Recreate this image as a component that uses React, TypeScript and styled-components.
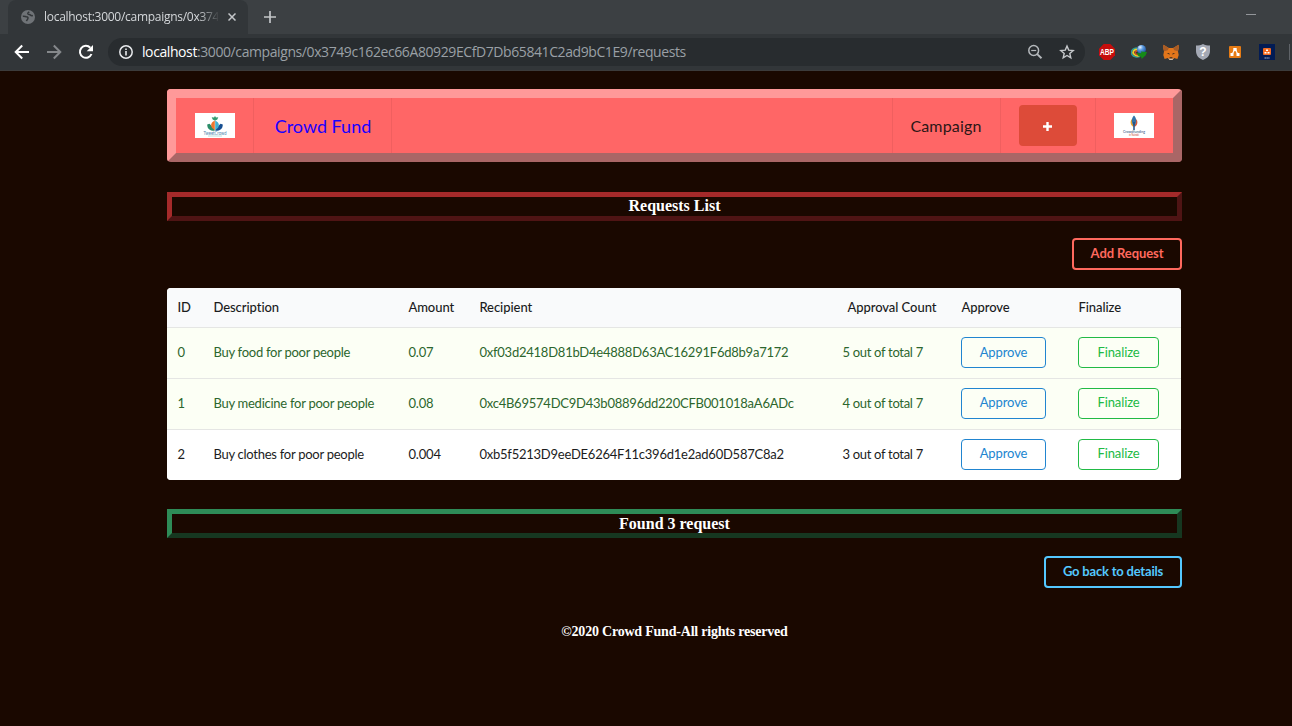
import React from 'react';
import styled, { createGlobalStyle } from 'styled-components';

const GlobalStyle = createGlobalStyle`
  *, *::before, *::after { box-sizing: border-box; }
  html, body { margin: 0; height: 100%; overflow: hidden; background: #1a0800; }
  body { font-family: Lato, sans-serif; font-size: 13px; }
  svg { display: block; flex: none; }
`;

const Window = styled.div`
  width: 1292px;
  height: 726px;
  overflow: hidden;
  background: #1a0800;
`;

const TabStrip = styled.div`
  display: flex;
  height: 34px;
  padding-left: 8px;
  background: #3c4043;
`;

const Tab = styled.div`
  display: flex;
  align-items: center;
  width: 240px;
  padding: 0 10px 0 13px;
  background: #323639;
  border-radius: 8px 8px 0 0;
`;

const TabTitle = styled.div`
  width: 174px;
  margin: 0 10px 0 9px;
  overflow: hidden;
  white-space: nowrap;
  font: 12px/16px 'Open Sans', sans-serif;
  letter-spacing: -0.28px;
  color: #d4d7da;
  mask-image: linear-gradient(to right, #000 154px, transparent 176px);
`;

const NewTab = styled.div`
  display: flex;
  align-items: center;
  padding-left: 16px;
`;

const Minimise = styled.div`
  width: 10px;
  height: 1px;
  margin: 14px 36px 0 auto;
  background: #93969a;
`;

const Toolbar = styled.div`
  display: flex;
  align-items: center;
  height: 37px;
  padding-left: 14px;
  background: #323639;
  border-bottom: 1px solid #3c3b3b;
`;

const NavButtons = styled.div`
  display: flex;
  gap: 16px;
  margin-right: 14px;
`;

const AddressBar = styled.div`
  display: flex;
  align-items: center;
  width: 977px;
  height: 28px;
  padding: 0 10px 0 11px;
  border-radius: 14px;
  background: #282c2f;
`;

const Url = styled.div`
  flex: 1;
  margin-left: 9px;
  white-space: nowrap;
  font: 14px/20px 'Open Sans', sans-serif;
  letter-spacing: -0.41px;
  color: #9aa0a6;

  b { font-weight: 400; color: #ffffff; }
`;

const AddressActions = styled.div`
  display: flex;
  gap: 16px;
`;

const Extensions = styled.div`
  display: flex;
  align-items: center;
  gap: 16px;
  margin-left: 14px;
`;

const ToolbarDivider = styled.div`
  width: 1px;
  height: 16px;
  margin-left: -2px;
  background: #5f6368;
`;

const Page = styled.main`
  width: 1015px;
  margin: 18px 0 0 167px;
`;

const Menu = styled.nav`
  display: flex;
  height: 73px;
  border: 9px solid;
  border-color: #ff9999 #aa6666 #aa6666 #ff9999;
  border-radius: 4px;
  background: #ff6666;
`;

const MenuItem = styled.div<{ $width: number; $side?: 'left' | 'right' }>`
  display: flex;
  align-items: center;
  justify-content: center;
  width: ${p => p.$width}px;
  ${p => (p.$side === 'right' ? 'border-left' : 'border-right')}: 1px solid #f05f5f;
  ${p => p.$side === 'right' && 'padding-right: 1px;'}
`;

const MenuSpacer = styled.div`
  flex: 1;
`;

const Brand = styled.a`
  padding-left: 1px;
  font-size: 18px;
  line-height: 24px;
  color: #1a00ff;
`;

const MenuLink = styled.a`
  font-size: 16px;
  line-height: 22px;
  letter-spacing: 0.18px;
  color: #2b1616;
`;

const PlusButton = styled.button`
  display: flex;
  align-items: center;
  justify-content: center;
  width: 58px;
  height: 41px;
  padding: 2px 1px 0 0;
  border: 0;
  border-radius: 4px;
  background: #dd4b39;
`;

const Logo = styled.div`
  width: 40px;
  height: 25px;
  background: #ffffff;
`;

const Banner = styled.h3<{ $light: string; $dark: string; $top: number; $line: number }>`
  height: 29px;
  margin: ${p => p.$top}px 0 0;
  border: 5px solid;
  border-color: ${p => `${p.$light} ${p.$dark} ${p.$dark} ${p.$light}`};
  font: bold 16px/${p => p.$line}px 'Liberation Serif', serif;
  text-align: center;
  color: #ffffff;
`;

const Actions = styled.div<{ $top: number }>`
  display: flex;
  justify-content: flex-end;
  margin-top: ${p => p.$top}px;
`;

const OutlineButton = styled.button<{ $color: string; $width: number; $spacing: number }>`
  width: ${p => p.$width}px;
  height: 32px;
  padding: 0 0 2px;
  border: 2px solid ${p => p.$color};
  border-radius: 4px;
  background: transparent;
  font: bold 13px/16px Lato, sans-serif;
  letter-spacing: ${p => p.$spacing}px;
  white-space: nowrap;
  color: ${p => p.$color};
`;

const Table = styled.table`
  width: 1014px;
  height: 192px;
  margin-top: 18px;
  table-layout: fixed;
  border-collapse: separate;
  border-spacing: 0;
  border-radius: 4px;
  overflow: hidden;
  background: #ffffff;
`;

const HeadCell = styled.th<{ $indent?: number }>`
  height: 39px;
  padding: 0 0 2px ${p => 10.4 + (p.$indent ?? 0)}px;
  background: #f9fafb;
  font: 500 13px/16px Lato, sans-serif;
  letter-spacing: -0.05px;
  text-align: left;
  white-space: nowrap;
  color: #1b1c1d;
`;

const Row = styled.tr<{ $positive: boolean }>`
  background: ${p => (p.$positive ? '#fcfff5' : '#ffffff')};
  color: ${p => (p.$positive ? '#2c662d' : '#1b1c1d')};
`;

const Cell = styled.td<{ $spacing?: number }>`
  height: 51px;
  padding: 0 0 2px 10.4px;
  border-top: 1px solid #e5e6e4;
  font-size: 13px;
  line-height: 16px;
  letter-spacing: ${p => p.$spacing ?? 0}px;
  white-space: nowrap;
`;

const ActionCell = styled(Cell)`
  padding-left: 10px;
`;

const RowButton = styled.button<{ $color: string; $width: number }>`
  display: block;
  width: ${p => p.$width}px;
  height: 31px;
  padding: 0 0 1px;
  border: 1px solid ${p => p.$color};
  border-radius: 4px;
  background: transparent;
  font: 13px/16px Lato, sans-serif;
  letter-spacing: -0.1px;
  color: ${p => p.$color};

  ${Row}:nth-child(n + 2) & { padding-bottom: 3px; }
`;

const Footer = styled.footer`
  margin-top: 35px;
  font: bold 14px/17px 'Liberation Serif', serif;
  letter-spacing: -0.21px;
  text-align: center;
  color: #ffffff;
`;

const COLUMNS = [36, 195, 71, 363, 119, 117, 113];

const REQUESTS = [
  { id: 0, description: 'Buy food for poor people', amount: '0.07', recipient: '0xf03d2418D81bD4e4888D63AC16291F6d8b9a7172', approvals: 5, ready: true },
  { id: 1, description: 'Buy medicine for poor people', amount: '0.08', recipient: '0xc4B69574DC9D43b08896dd220CFB001018aA6ADc', approvals: 4, ready: true },
  { id: 2, description: 'Buy clothes for poor people', amount: '0.004', recipient: '0xb5f5213D9eeDE6264F11c396d1e2ad60D587C8a2', approvals: 3, ready: false },
];

const GlobeIcon = () => (
  <svg width="14" height="14" viewBox="0 0 14 14">
    <circle cx="7" cy="7" r="7" fill="#6f7377" />
    <path d="M1.800 6.300c1.500-.2 2.600.3 3.600.4 1.500.1 2 .9 1.300 2.300-.3.800-1 1.300-1.200 2.200M8.300 1.900c-1 .7-1.800 1-1.500 1.900.4 1.100 1.900.3 2.600 1.200.5.700 1.500.8 2.500.6" fill="none" stroke="#323639" strokeWidth="1.500" />
  </svg>
);

const CloseIcon = () => (
  <svg width="8" height="8" viewBox="0 0 8 8" stroke="#c4c7ca" strokeWidth="1.500">
    <path d="M.5.5l7 7M7.500.5l-7 7" />
  </svg>
);

const PlusIcon = () => (
  <svg width="12" height="12" viewBox="0 0 12 12" stroke="#c2c5c8" strokeWidth="1.700">
    <path d="M6 0v12M0 6h12" />
  </svg>
);

const BackIcon = ({ color, flipped }: { color: string; flipped?: boolean }) => (
  <svg width="16" height="16" viewBox="0 0 16 16" fill="none" stroke={color} strokeWidth="2">
    <path d={flipped ? 'M1 8h13M7.800 1.500L14.300 8l-6.500 6.500' : 'M15 8H2M8.200 1.500L1.700 8l6.500 6.500'} />
  </svg>
);

const ReloadIcon = () => (
  <svg width="16" height="16" viewBox="0 0 16 16">
    <path d="M13.500 10A6 6 0 1 1 12.300 3.700" fill="none" stroke="#fff" strokeWidth="2" />
    <path d="M15 1v6.300H8.700z" fill="#fff" />
  </svg>
);

const InfoIcon = () => (
  <svg width="14" height="14" viewBox="0 0 14 14">
    <circle cx="7" cy="7" r="6.200" fill="none" stroke="#e8eaed" strokeWidth="1.500" />
    <path d="M6.200 6h1.600v4.500H6.200zM6.200 3.400h1.600V5H6.200z" fill="#e8eaed" />
  </svg>
);

const ZoomOutIcon = () => (
  <svg width="16" height="16" viewBox="0 0 16 16" fill="none" stroke="#b4b8bc" strokeWidth="1.500">
    <circle cx="6.700" cy="6.500" r="4.900" />
    <path d="M4.200 6.500h5" strokeWidth="1.200" />
    <path d="M10.200 10.100l4.300 4.200" strokeWidth="1.900" />
  </svg>
);

const StarIcon = () => (
  <svg width="16" height="16" viewBox="0 0 16 16" fill="none" stroke="#c6c9cc" strokeWidth="1.400">
    <path d="M8 2l1.700 4.100 4.500.4-3.400 2.900 1 4.400L8 11.500l-3.800 2.300 1-4.400-3.400-2.900 4.500-.4z" />
  </svg>
);

const BlockerIcon = () => (
  <svg width="16" height="16" viewBox="0 0 16 16">
    <path d="M4.700 0h6.600L16 4.700v6.600L11.300 16H4.700L0 11.300V4.700z" fill="#c70d0c" />
    <text x="8" y="11" textAnchor="middle" textLength="14" lengthAdjust="spacingAndGlyphs" fontFamily="Liberation Sans, sans-serif" fontWeight="700" fontSize="8.500" fill="#fff">ABP</text>
  </svg>
);

const DownloaderIcon = () => (
  <svg width="16" height="16" viewBox="0 0 16 16">
    <defs>
      <radialGradient id="sphere" cx=".35" cy=".25" r=".8">
        <stop offset="0" stopColor="#e8f4ff" />
        <stop offset=".4" stopColor="#5b9be0" />
        <stop offset="1" stopColor="#174a94" />
      </radialGradient>
    </defs>
    <path d="M6 4C1 4-.5 8 1 10.500c1.500 2.400 5 3 8 1.800" fill="none" stroke="#2c9c96" strokeWidth="1.500" />
    <path d="M6.500 5.500C2.500 5.300 1.300 8 2.800 10s4 2 6 1.500" fill="none" stroke="#e9d02c" strokeWidth="1.800" />
    <path d="M6.500 7C4 7 3.500 8.500 5 10s3 .8 4 .6" fill="none" stroke="#d64524" strokeWidth="1.300" />
    <circle cx="10.500" cy="5.500" r="4.500" fill="url(#sphere)" />
    <path d="M5.500 8.300c1.200 1 3 1.300 5 .8L9.800 7.500 16 8l-1.300 3.200-4 3.800-.6-2.300c-2 .1-3.800-1-4.600-4.400z" fill="#158a18" />
  </svg>
);

const FoxIcon = () => (
  <svg width="16" height="16" viewBox="0 0 16 16">
    <path d="M.5.800L5.800 4h4.400L15.500.8l.4 2.700-.9 4 .7 3.500-1.300 4-3.300-1L9.400 16H6.600l-1.700-2-3.300 1-1.300-4L1 7.500l-.9-4z" fill="#e2761b" />
    <path d="M.5.800L5.800 4l-1 2.200L1.200 7.200.1 3.500zM15.500.8L10.200 4l1 2.200 3.600 1 1.100-3.700z" fill="#a85c26" />
    <path d="M3.800 9l2.500.2.300 1.500zM12.200 9l-2.500.2-.3 1.500zM6.700 13.200h2.600l.4 1.300H6.300z" fill="#33281f" />
    <path d="M5.200 14.300l1.500.4h2.600l1.500-.4L9.300 16H6.700z" fill="#c9bdb0" />
  </svg>
);

const ShieldIcon = () => (
  <svg width="16" height="16" viewBox="0 0 16 16">
    <path d="M8 0c2 1.200 4.300 1.500 7 1.500V7c0 4.500-3 7.500-7 9-4-1.500-7-4.500-7-9V1.500C3.700 1.500 6 1.200 8 0z" fill="#a4a9b5" />
    <text x="8" y="12" textAnchor="middle" fontFamily="Liberation Sans, sans-serif" fontWeight="700" fontSize="12" fill="#fff">?</text>
  </svg>
);

const DiagramIcon = () => (
  <svg width="16" height="16" viewBox="0 0 16 16">
    <rect x="2" y="2" width="12" height="12" rx="1" fill="#e67b14" />
    <path d="M8 5l-3.300 6M8 5l3.300 6" stroke="#fff" strokeWidth="1.200" />
    <path d="M6.300 4h3.400v3H6.300zM3.500 9h3v3h-3zM9.500 9h3v3h-3z" fill="#fff" />
  </svg>
);

const DesktopIcon = () => (
  <svg width="16" height="16" viewBox="0 0 16 16">
    <rect width="16" height="16" fill="#021b54" />
    <rect x="4" y="4" width="8" height="7" rx="1" fill="#f26a21" />
    <path d="M7 5.500h2v1.500H7zM5.500 8h2v1.500h-2zM8.500 8h2v1.500h-2z" fill="#fff" />
    <path d="M5.500 14h5" stroke="#aab4cc" strokeWidth="1" strokeDasharray="1.500 .4" />
  </svg>
);

const TweetCrowdLogo = () => (
  <svg width="40" height="25" viewBox="0 0 40 25">
    <path d="M20 3l1 1.600 2.300-.3-1 2.200L20 7.700l-2.300-1.200-1-2.200 2.300.3z" fill="#359b70" />
    <path d="M12.200 11.500l2.300-.8 4.500 4.500.8 2.600c-4.500.2-7.500-1.500-7.600-6.300z" fill="#2b8c68" />
    <path d="M27.800 11.500l-2.300-.8-4.500 4.500-.8 2.600c4.500.2 7.500-1.500 7.600-6.300z" fill="#174f91" />
    <path d="M19.800 7.800c-3.600 1.500-4.600 4-2.800 7l2.800 2.400z" fill="#ef762e" />
    <path d="M20.200 7.800c3.600 1.500 4.600 4 2.800 7l-2.800 2.400z" fill="#42afd1" />
    <text x="20" y="21.800" textAnchor="middle" textLength="23" lengthAdjust="spacingAndGlyphs" fontFamily="Lato, sans-serif" fontSize="4.800" fill="#4a83ad">TweetCrowd</text>
    <path d="M13 23h14" stroke="#aad8d3" strokeWidth=".8" />
  </svg>
);

const CrowdfundingLogo = () => (
  <svg width="40" height="25" viewBox="0 0 40 25">
    <path d="M17.600 6c-1.800 3.300-1.200 6.300 2 8z" fill="#e9a42c" />
    <path d="M22.400 6c1.800 3.300 1.200 6.300-2 8z" fill="#d75837" />
    <path d="M20 2.500c2.600 2.500 3.200 7 0 11-3.200-4-2.600-8.500 0-11z" fill="#3474a8" />
    <path d="M20 9v8" stroke="#214c80" strokeWidth="1.500" />
    <text x="20" y="20.300" textAnchor="middle" textLength="22" lengthAdjust="spacingAndGlyphs" fontFamily="Lato, sans-serif" fontSize="4.500" fill="#24487a">Crowdfunding</text>
    <text x="20" y="23.300" textAnchor="middle" textLength="10" lengthAdjust="spacingAndGlyphs" fontFamily="Lato, sans-serif" fontSize="3.300" fill="#c83e31">in Nairobi</text>
  </svg>
);

const AddIcon = () => (
  <svg width="9" height="9" viewBox="0 0 9 9">
    <path d="M3.300 0h2.400v3.300H9v2.400H5.700V9H3.300V5.700H0V3.300h3.300z" fill="#fff" />
  </svg>
);

export default function App() {
  return (
    <Window>
      <GlobalStyle />
      <TabStrip>
        <Tab>
          <GlobeIcon />
          <TabTitle>localhost:3000/campaigns/0x3749</TabTitle>
          <CloseIcon />
        </Tab>
        <NewTab><PlusIcon /></NewTab>
        <Minimise />
      </TabStrip>
      <Toolbar>
        <NavButtons>
          <BackIcon color="#ffffff" />
          <BackIcon color="#85888b" flipped />
          <ReloadIcon />
        </NavButtons>
        <AddressBar>
          <InfoIcon />
          <Url><b>localhost</b>:3000/campaigns/0x3749c162ec66A80929ECfD7Db65841C2ad9bC1E9/requests</Url>
          <AddressActions>
            <ZoomOutIcon />
            <StarIcon />
          </AddressActions>
        </AddressBar>
        <Extensions>
          <BlockerIcon />
          <DownloaderIcon />
          <FoxIcon />
          <ShieldIcon />
          <DiagramIcon />
          <DesktopIcon />
          <ToolbarDivider />
        </Extensions>
      </Toolbar>
      <Page>
        <Menu>
          <MenuItem $width={78}><Logo><TweetCrowdLogo /></Logo></MenuItem>
          <MenuItem $width={138}><Brand>Crowd Fund</Brand></MenuItem>
          <MenuSpacer />
          <MenuItem $width={108} $side="right"><MenuLink>Campaign</MenuLink></MenuItem>
          <MenuItem $width={95} $side="right"><PlusButton aria-label="Add"><AddIcon /></PlusButton></MenuItem>
          <MenuItem $width={78} $side="right"><Logo><CrowdfundingLogo /></Logo></MenuItem>
        </Menu>
        <Banner $light="#a52a2a" $dark="#4f1414" $top={30} $line={17}>Requests List</Banner>
        <Actions $top={17}>
          <OutlineButton $color="#ff695e" $width={110} $spacing={-0.1}>Add Request</OutlineButton>
        </Actions>
        <Table>
          <colgroup>
            {COLUMNS.map((width, i) => <col key={i} width={width} />)}
          </colgroup>
          <thead>
            <tr>
              <HeadCell>ID</HeadCell>
              <HeadCell>Description</HeadCell>
              <HeadCell>Amount</HeadCell>
              <HeadCell>Recipient</HeadCell>
              <HeadCell $indent={5}>Approval Count</HeadCell>
              <HeadCell>Approve</HeadCell>
              <HeadCell>Finalize</HeadCell>
            </tr>
          </thead>
          <tbody>
            {REQUESTS.map(request => (
              <Row key={request.id} $positive={request.ready}>
                <Cell>{request.id}</Cell>
                <Cell $spacing={-0.26}>{request.description}</Cell>
                <Cell $spacing={-0.15}>{request.amount}</Cell>
                <Cell $spacing={-0.23}>{request.recipient}</Cell>
                <Cell $spacing={-0.3}>{request.approvals} out of total 7</Cell>
                <ActionCell><RowButton $color="#2185d0" $width={85}>Approve</RowButton></ActionCell>
                <ActionCell><RowButton $color="#21ba45" $width={81}>Finalize</RowButton></ActionCell>
              </Row>
            ))}
          </tbody>
        </Table>
        <Banner $light="#2e8b57" $dark="#163720" $top={29} $line={19}>Found 3 request</Banner>
        <Actions $top={18}>
          <OutlineButton $color="#54c8ff" $width={138} $spacing={-0.2}>Go back to details</OutlineButton>
        </Actions>
        <Footer>©2020 Crowd Fund-All rights reserved</Footer>
      </Page>
    </Window>
  );
}
